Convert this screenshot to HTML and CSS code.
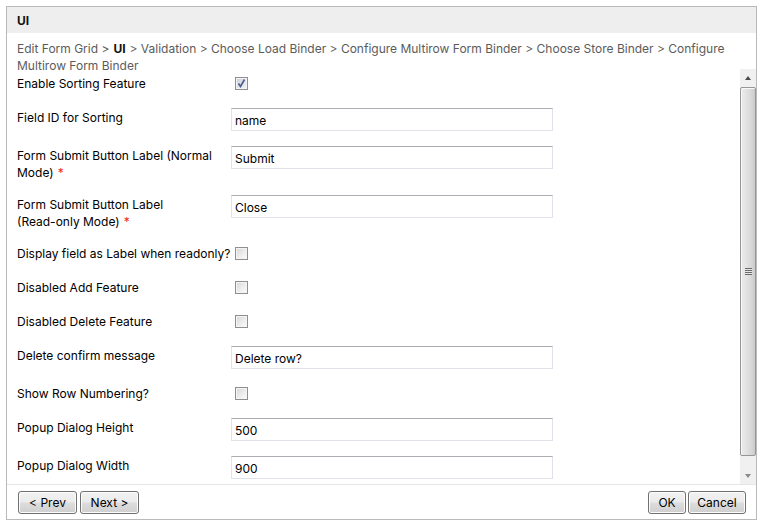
FILE: index.html
```html
<!DOCTYPE html>
<html>
<head>
<meta charset="utf-8">
<link rel="stylesheet" href="styles.css">
</head>
<body>
<div class="dialog">
  <div class="title">UI</div>
  <div class="crumbs"><span>Edit Form Grid &gt;</span><b class="cur">UI</b><span>&gt; Validation &gt; Choose Load Binder &gt; Configure Multirow Form Binder &gt; Choose Store Binder &gt; Configure</span><br><span>Multirow Form Binder</span></div>
  <div class="scroll">
    <div class="content">
      <div class="row"><div class="label">Enable Sorting Feature</div><span class="cb checked"><svg width="11" height="11" viewBox="0 0 11 11"><path d="M2.5 5.5 L4.5 8.5 L8.5 1.5" fill="none" stroke="#4a5b8c" stroke-width="1.6"/></svg></span></div>
      <div class="row"><div class="label">Field ID for Sorting</div><input class="text" type="text" value="name"></div>
      <div class="row"><div class="label">Form Submit Button Label (Normal<br>Mode)<span class="req">*</span></div><input class="text" type="text" value="Submit"></div>
      <div class="row"><div class="label">Form Submit Button Label<br>(Read-only Mode)<span class="req">*</span></div><input class="text" type="text" value="Close"></div>
      <div class="row"><div class="label">Display field as Label when readonly?</div><span class="cb"></span></div>
      <div class="row"><div class="label">Disabled Add Feature</div><span class="cb"></span></div>
      <div class="row"><div class="label">Disabled Delete Feature</div><span class="cb"></span></div>
      <div class="row"><div class="label">Delete confirm message</div><input class="text" type="text" value="Delete row?"></div>
      <div class="row"><div class="label">Show Row Numbering?</div><span class="cb"></span></div>
      <div class="row"><div class="label">Popup Dialog Height</div><input class="text" type="text" value="500"></div>
      <div class="row"><div class="label">Popup Dialog Width</div><input class="text" type="text" value="900"></div>
    </div>
    <div class="vbar">
      <div class="arrow up"><span class="tri-up"></span></div>
      <div class="track">
        <div class="thumb"><span class="grip"></span></div>
      </div>
      <div class="arrow down"><span class="tri-down"></span></div>
    </div>
  </div>
  <div class="footer">
    <div class="group">
      <button class="btn prev">&lt; Prev</button>
      <button class="btn next">Next &gt;</button>
    </div>
    <div class="group right">
      <button class="btn ok">OK</button>
      <button class="btn cancel">Cancel</button>
    </div>
  </div>
</div>
</body>
</html>
```
FILE: styles.css
```css
html, body {
  margin: 0;
  padding: 0;
  background: #ffffff;
}
body {
  font-family: Inter, "DejaVu Sans", sans-serif;
  font-size: 12px;
  color: #000;
}
.dialog {
  margin: 6px 0 0 6px;
  width: 751px;
  box-sizing: border-box;
  border: 1px solid #b9b9b9;
  display: flex;
  flex-direction: column;
}
.title {
  height: 25px;
  padding-top: 1px;
  line-height: 25px;
  background: #eeeeee;
  padding-left: 10px;
  font-weight: bold;
  color: #111;
}
.crumbs {
  height: 36px;
  box-sizing: border-box;
  padding: 7px 10px 0 10px;
  line-height: 17px;
  color: #5b5b5b;
}
.crumbs .cur {
  color: #111;
  margin: 0 4px;
}
.scroll {
  height: 415px;
  display: flex;
}
.content {
  flex: 1;
  overflow: hidden;
  padding: 5px 0 0 10px;
}
.row {
  display: flex;
  align-items: flex-start;
  margin-bottom: 15px;
}
.label {
  width: 214px;
  flex: none;
  line-height: 17px;
  padding-top: 1px;
  margin-bottom: -1px;
  color: #000;
}
.req {
  color: #e8261c;
  margin-left: 4px;
}
.cb {
  width: 13px;
  height: 13px;
  box-sizing: border-box;
  margin: 3px 3px 3px 4px;
  border: 1px solid #8f8f8f;
  background: linear-gradient(135deg, #d6d6d6 0%, #efefef 60%, #fbfbfb 100%);
  box-shadow: inset 0 0 0 1px #f4f4f4;
  display: flex;
  align-items: center;
  justify-content: center;
}
.cb.checked {
  background: linear-gradient(135deg, #c9cfdc 0%, #e4e7ee 60%, #f4f5f8 100%);
}
.cb svg {
  display: block;
}
.text {
  width: 322px;
  height: 23px;
  box-sizing: border-box;
  margin: 0;
  padding: 1px 3px 0 3px;
  border: 1px solid #dfe3e9;
  border-top-color: #abadb3;
  border-left-color: #e2e3ea;
  font-family: Inter, "DejaVu Sans", sans-serif;
  font-size: 12px;
  color: #000;
  background: #fff;
  outline: none;
}
.vbar {
  width: 16px;
  flex: none;
  display: flex;
  flex-direction: column;
  background: #f0f0f0;
}
.arrow {
  height: 17px;
  flex: none;
  display: flex;
  align-items: center;
  justify-content: center;
}
.tri-up {
  width: 0;
  height: 0;
  border-left: 3.5px solid transparent;
  border-right: 3.5px solid transparent;
  border-bottom: 4px solid #4a4a4a;
}
.tri-down {
  width: 0;
  height: 0;
  border-left: 3.5px solid transparent;
  border-right: 3.5px solid transparent;
  border-top: 4px solid #8a8a8a;
}
.track {
  flex: 1;
  padding: 1px 0 11px 0;
  display: flex;
}
.thumb {
  flex: 1;
  box-sizing: border-box;
  border: 1px solid #979797;
  border-radius: 2px;
  background: linear-gradient(to right, #ececec 0%, #e2e2e2 40%, #d5d5d5 80%, #c9c9c9 100%);
  box-shadow: inset 1px 1px 0 #f8f8f8;
  display: flex;
  align-items: center;
  justify-content: center;
}
.grip {
  width: 7px;
  height: 7px;
  background: repeating-linear-gradient(to bottom, #6a6a6a 0, #6a6a6a 1px, #e6e6e6 1px, #e6e6e6 2px);
}
.footer {
  border-top: 1px solid #e6e6e6;
  padding: 6px 10px 5px 11px;
  display: flex;
  justify-content: space-between;
}
.group {
  display: flex;
  gap: 3px;
}
.group.right {
  gap: 2px;
}
.btn {
  height: 23px;
  margin: 0;
  padding: 0;
  box-sizing: border-box;
  border: 1px solid #707070;
  border-radius: 3px;
  background: linear-gradient(to bottom, #f2f2f2 0%, #ebebeb 48%, #dddddd 52%, #cfcfcf 100%);
  box-shadow: inset 0 0 0 1px #fcfcfc;
  font-family: Inter, "DejaVu Sans", sans-serif;
  font-size: 12px;
  color: #000;
}
.btn.prev, .btn.next { width: 59px; }
.btn.ok { width: 38px; }
.btn.cancel { width: 58px; }
```
